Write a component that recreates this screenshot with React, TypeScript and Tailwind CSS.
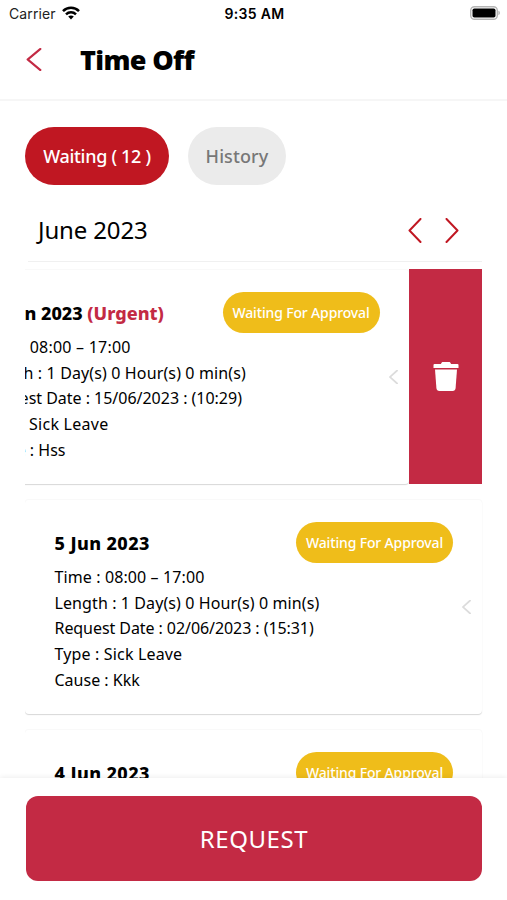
import clsx from "clsx";

type Line = { text: string; className?: string };

type Leave = {
  id: number;
  date: string;
  urgent?: boolean;
  swiped?: boolean;
  lines: Line[];
};

const leaves: Leave[] = [
  {
    id: 1,
    date: "15 Jun 2023",
    urgent: true,
    swiped: true,
    lines: [
      { text: "Time : 08:00 – 17:00", className: "-ml-[2.5px] tracking-[0.22px]" },
      { text: "Length : 1 Day(s) 0 Hour(s) 0 min(s)", className: "-ml-px tracking-[0.13px]" },
      { text: "Request Date : 15/06/2023 : (10:29)", className: "tracking-[-0.02px]" },
      { text: "Type : Sick Leave", className: "-ml-[2px] tracking-[0.26px]" },
      { text: "Cause : Hss", className: "-ml-px" },
    ],
  },
  {
    id: 2,
    date: "5 Jun 2023",
    lines: [
      { text: "Time : 08:00 – 17:00", className: "tracking-[0.11px]" },
      { text: "Length : 1 Day(s) 0 Hour(s) 0 min(s)", className: "tracking-[0.1px]" },
      { text: "Request Date : 02/06/2023 : (15:31)", className: "tracking-[-0.07px]" },
      { text: "Type : Sick Leave", className: "tracking-[0.16px]" },
      { text: "Cause : Kkk" },
    ],
  },
  { id: 3, date: "4 Jun 2023", lines: [] },
];

function Chevron({ className, flip, width = 2 }: { className: string; flip?: boolean; width?: number }) {
  return (
    <svg viewBox="0 0 14 24" fill="none" stroke="currentColor" strokeWidth={width} preserveAspectRatio="none" className={className}>
      <path d={flip ? "M1.5 1 L12.5 12 L1.5 23" : "M12.5 1 L1.5 12 L12.5 23"} strokeLinecap="round" strokeLinejoin="round" />
    </svg>
  );
}

function StatusBar() {
  return (
    <div className="grid h-[27px] shrink-0 grid-cols-3 items-center pl-[9px] pr-[7px] font-['Inter',sans-serif] text-[14px] text-[#222]">
      <div className="flex items-center gap-[6px]">
        <span className="tracking-[0.1px]">Carrier</span>
        <svg viewBox="0 0 18 14" className="-mt-[2px] h-[14px] w-[18px]" fill="none" stroke="#000" strokeWidth="2.5">
          <path d="M1 5.2 C5.4 0.7 12.6 0.7 17 5.2" />
          <path d="M4 8.3 C6.8 5.6 11.2 5.6 14 8.3" />
          <path d="M6.2 10.6 C7.8 9.2 10.2 9.2 11.8 10.6 L9 13.5 Z" fill="#000" stroke="none" />
        </svg>
      </div>
      <div className="text-center font-semibold tracking-[0.3px] text-black">9:35 AM</div>
      <svg viewBox="0 0 30 14" className="-mt-px h-[14px] w-[30px] justify-self-end">
        <rect x="0.7" y="0.7" width="26.6" height="12.6" rx="3.8" fill="#fff" stroke="#b5b5b5" strokeWidth="1.4" />
        <rect x="2.5" y="2.5" width="23" height="9" rx="1.8" fill="#000" />
        <path d="M28.4 4.8 C30.4 5.4 30.4 8.6 28.4 9.2 Z" fill="#b5b5b5" />
      </svg>
    </div>
  );
}

function LeaveCard({ leave }: { leave: Leave }) {
  return (
    <div className={clsx("flex h-[216px] shrink-0", leave.swiped && "-ml-[73.5px] w-[531px]")}>
      <div className="flex h-[215px] w-[457px] shrink-0 rounded-[4px] border-t border-t-[#f9f9f9] bg-white pl-[29.5px] pr-[10px] shadow-[0_1px_1px_rgba(0,0,0,0.16)]">
        <div className="w-[398.5px] shrink-0 whitespace-nowrap pt-[22px]">
          <div className="flex h-[41px] items-center justify-between">
            <div className={clsx("pt-px text-[18px] font-extrabold", !leave.urgent && "tracking-[0.4px]")}>
              {leave.date} {leave.urgent && <span className="text-[#c32a44]">(Urgent)</span>}
            </div>
            <div className="flex h-[41px] w-[157px] items-center justify-center rounded-full bg-[#efbd1a] text-[14px] font-medium tracking-[-0.15px] text-white">
              Waiting For Approval
            </div>
          </div>
          <div className="pt-[2px] text-[16px] leading-[25.7px] text-black">
            {leave.lines.map((line) => (
              <div key={line.text} className={line.className}>{line.text}</div>
            ))}
          </div>
        </div>
        <Chevron className="ml-[9px] h-[14px] w-[9px] shrink-0 self-center text-[#dcdcdc]" width={3} />
      </div>
      {leave.swiped && (
        <button className="ml-[0.5px] flex h-[215px] w-[73px] shrink-0 items-center justify-center bg-[#c32a44]">
          <svg viewBox="0 0 26 29" fill="#fff" className="h-[29px] w-[26px]">
            <path d="M1.5 2 H8 C8.5 0.4 9 0 10 0 H16 C17 0 17.5 0.4 18 2 H24.5 Q25.5 2 25.5 3 V6 H0.5 V3 Q0.5 2 1.5 2 Z" />
            <path d="M2 7.5 H24 L22.6 26 Q22.3 29 19.6 29 H6.4 Q3.7 29 3.4 26 Z" />
          </svg>
        </button>
      )}
    </div>
  );
}

export default function App() {
  return (
    <div className="flex h-[900px] w-[507px] flex-col overflow-hidden bg-white font-['Noto_Sans',sans-serif] text-black">
      <StatusBar />
      <header className="flex h-[74px] shrink-0 items-center border-b-2 border-[#f6f6f6] pb-[8px] pl-[26px]">
        <Chevron className="h-[23px] w-[16px] text-[#c32a44]" />
        <h1 className="ml-[38px] mt-[2px] text-[27px] font-black tracking-[-0.65px]">Time Off</h1>
      </header>

      <div className="flex shrink-0 gap-[19px] pl-[25px] pt-[26px] text-[18px] font-medium">
        <button className="h-[58px] w-[144px] rounded-full bg-[#c01722] tracking-[-0.3px] text-white">Waiting ( 12 )</button>
        <button className="h-[58px] w-[98px] rounded-full bg-[#ebebeb] tracking-[0.1px] text-[#777]">History</button>
      </div>

      <div className="ml-[28px] mr-[25px] flex h-[77px] shrink-0 items-center border-b border-[#f0f0f0] pl-[10px] pr-[23px] pt-[14px]">
        <div className="text-[24px] tracking-[-0.15px]">June 2023</div>
        <div className="ml-auto flex gap-[23px] text-[#c01722]">
          <Chevron className="h-[25px] w-[14px]" />
          <Chevron flip className="h-[25px] w-[14px]" />
        </div>
      </div>

      <div className="ml-[25px] mr-[24.5px] flex min-h-0 flex-1 flex-col gap-[14px] overflow-hidden pt-[7px]">
        {leaves.map((leave) => (
          <LeaveCard key={leave.id} leave={leave} />
        ))}
      </div>

      <footer className="h-[122px] shrink-0 bg-white px-[26px] pt-[18px] shadow-[0_-1px_5px_rgba(0,0,0,0.07)]">
        <button className="h-[85px] w-[456px] rounded-[12px] bg-[#c32a44] text-[24px] tracking-[0.55px] text-white">REQUEST</button>
      </footer>
    </div>
  );
}
